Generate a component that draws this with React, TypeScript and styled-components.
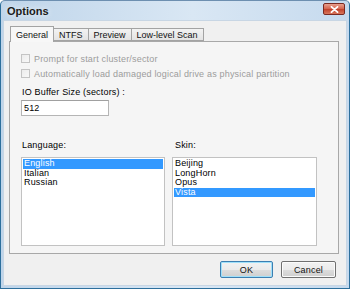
import React from "react";
import styled, {createGlobalStyle} from "styled-components";

const GlobalStyle = createGlobalStyle`
    html, body {
        margin: 0;
        padding: 0;
        background: #ffffff;
    }
    body {
        font-family: "Liberation Sans", Arial, sans-serif;
        font-size: 9px;
        letter-spacing: 0.18px;
        color: #000;
    }
`;

/* outer window frame, light aero-basic blue */
const Window = styled.div`
    position: relative;
    box-sizing: border-box;
    width: 350px;
    height: 289px;
    display: flex;
    flex-direction: column;
    padding: 0 2px 2px 2px;
    border: 1px solid #2d6f9c;
    border-top-color: #6d8fb0;
    border-radius: 5px 5px 0 0;
    background: linear-gradient(to right, #bfd5ea 0%, #d9e7f4 55%, #c6daee 100%);
`;

const TitleBar = styled.div`
    height: 19px;
    display: flex;
    align-items: center;
    justify-content: space-between;
    padding: 0 2px 0 4px;
`;

const Title = styled.span`
    font-family: "Liberation Sans", Arial, sans-serif;
    font-weight: bold;
    font-size: 11px;
    letter-spacing: 0;
    color: #1a1a1a;
    text-shadow: 0 0 6px rgba(255, 255, 255, 0.9);
`;

const CloseButton = styled.div`
    width: 20px;
    height: 10px;
    margin-top: -3px;
    display: flex;
    align-items: center;
    justify-content: center;
    border: 1px solid #7a2a22;
    border-radius: 2px;
    background: linear-gradient(to bottom, #e8a08e 0%, #d4624c 50%, #c0402a 51%, #d8765c 100%);
`;

const Client = styled.div`
    flex: 1;
    display: flex;
    flex-direction: column;
    background: #f0f0f0;
    border: 1px solid #c8d6e4;
    padding: 5px 7px 0 5px;
`;

const TabStrip = styled.div`
    display: flex;
    align-items: flex-end;
    padding-left: 1px;
    height: 15px;
    position: relative;
    z-index: 1;
`;

const Tab = styled.div<{ $active?: boolean }>`
    box-sizing: border-box;
    height: ${p => (p.$active ? "16px" : "13px")};
    padding: 0 5px;
    display: flex;
    align-items: center;
    border: 1px solid #a3a3a3;
    border-bottom: ${p => (p.$active ? "none" : "1px solid #a3a3a3")};
    margin-left: ${p => (p.$active ? "0" : "-1px")};
    margin-bottom: ${p => (p.$active ? "-1px" : "0")};
    background: ${p => (p.$active ? "#f7f7f7" : "linear-gradient(to bottom, #f3f3f3, #e3e3e3)")};
    font-size: 9px;
    letter-spacing: 0;
    color: #111;
    white-space: nowrap;
`;

const Panel = styled.div`
    box-sizing: border-box;
    height: 213px;
    border: 1px solid #a8a8a8;
    background: #f5f5f5;
    padding: 9px 22px 7px 11px;
    display: flex;
    flex-direction: column;
`;

const CheckRow = styled.label`
    display: flex;
    align-items: center;
    gap: 4px;
    height: 15px;
    color: #9c9c9c;
`;

const CheckBox = styled.span`
    box-sizing: border-box;
    width: 9px;
    height: 9px;
    border: 1px solid #c4c4c4;
    background: linear-gradient(135deg, #ececec, #f8f8f8);
`;

const FieldLabel = styled.div<{ $indent?: number }>`
    margin-top: ${p => (p.$indent === undefined ? "6px" : "0")};
    padding-left: ${p => p.$indent ?? 1}px;
    height: 11px;
    line-height: 11px;
`;

const TextInput = styled.div`
    box-sizing: border-box;
    width: 88px;
    height: 16px;
    margin-top: 2px;
    border: 1px solid #b5b5b5;
    border-top-color: #a0a0a0;
    background: #fff;
    padding-left: 2px;
    display: flex;
    align-items: center;
`;

const ListsGrid = styled.div`
    margin-top: 24px;
    display: grid;
    grid-template-columns: 144px 145px;
    column-gap: 7px;
    flex: 1;
`;

const ListColumn = styled.div`
    display: flex;
    flex-direction: column;
`;

const ListBox = styled.div`
    box-sizing: border-box;
    margin-top: 6px;
    flex: 1;
    border: 1px solid #c2c2c2;
    background: #fff;
    padding: 1px;
`;

const ListItem = styled.div<{ $selected?: boolean }>`
    height: 9.5px;
    line-height: 9.5px;
    padding-left: 1px;
    background: ${p => (p.$selected ? "#3399ff" : "transparent")};
    color: ${p => (p.$selected ? "#fff" : "#000")};
`;

const ButtonRow = styled.div`
    flex: 1;
    display: flex;
    justify-content: flex-end;
    align-items: center;
    gap: 8px;
    padding-right: 3px;
`;

const Button = styled.div<{ $default?: boolean; $w: number }>`
    box-sizing: border-box;
    width: ${p => p.$w}px;
    height: 17px;
    display: flex;
    align-items: center;
    justify-content: center;
    border: 1px solid ${p => (p.$default ? "#3c7fb1" : "#707070")};
    border-radius: 2px;
    background: linear-gradient(to bottom, #f2f2f2 0%, #ebebeb 50%, #dddddd 51%, #cfcfcf 100%);
    box-shadow: ${p => (p.$default ? "inset 0 0 0 1px #9fe0fa" : "inset 0 0 0 1px #fbfbfb")};
    font-size: 9px;
    color: #111;
`;

const tabs = ["General", "NTFS", "Preview", "Low-level Scan"];
const languages = ["English", "Italian", "Russian"];
const skins = ["Beijing", "LongHorn", "Opus", "Vista"];

export default function App() {
    return (
        <>
            <GlobalStyle/>
            <Window>
                <TitleBar>
                    <Title>Options</Title>
                    <CloseButton>
                        <svg width="9" height="7" viewBox="0 0 9 7">
                            <path d="M1.5 0.8 L7.5 6.2 M7.5 0.8 L1.5 6.2" stroke="#fff" strokeWidth="1.8"
                                  strokeLinecap="round"/>
                        </svg>
                    </CloseButton>
                </TitleBar>
                <Client>
                    <TabStrip>
                        {tabs.map((t, i) => (
                            <Tab key={t} $active={i === 0}>{t}</Tab>
                        ))}
                    </TabStrip>
                    <Panel>
                        <CheckRow><CheckBox/>Prompt for start cluster/sector</CheckRow>
                        <CheckRow><CheckBox/>Automatically load damaged logical drive as physical partition</CheckRow>
                        <FieldLabel>IO Buffer Size (sectors) :</FieldLabel>
                        <TextInput>512</TextInput>
                        <ListsGrid>
                            <ListColumn>
                                <FieldLabel $indent={1}>Language:</FieldLabel>
                                <ListBox>
                                    {languages.map((l, i) => (
                                        <ListItem key={l} $selected={i === 0}>{l}</ListItem>
                                    ))}
                                </ListBox>
                            </ListColumn>
                            <ListColumn>
                                <FieldLabel $indent={3}>Skin:</FieldLabel>
                                <ListBox>
                                    {skins.map(s => (
                                        <ListItem key={s} $selected={s === "Vista"}>{s}</ListItem>
                                    ))}
                                </ListBox>
                            </ListColumn>
                        </ListsGrid>
                    </Panel>
                    <ButtonRow>
                        <Button $default $w={53}>OK</Button>
                        <Button $w={55}>Cancel</Button>
                    </ButtonRow>
                </Client>
            </Window>
        </>
    );
}
